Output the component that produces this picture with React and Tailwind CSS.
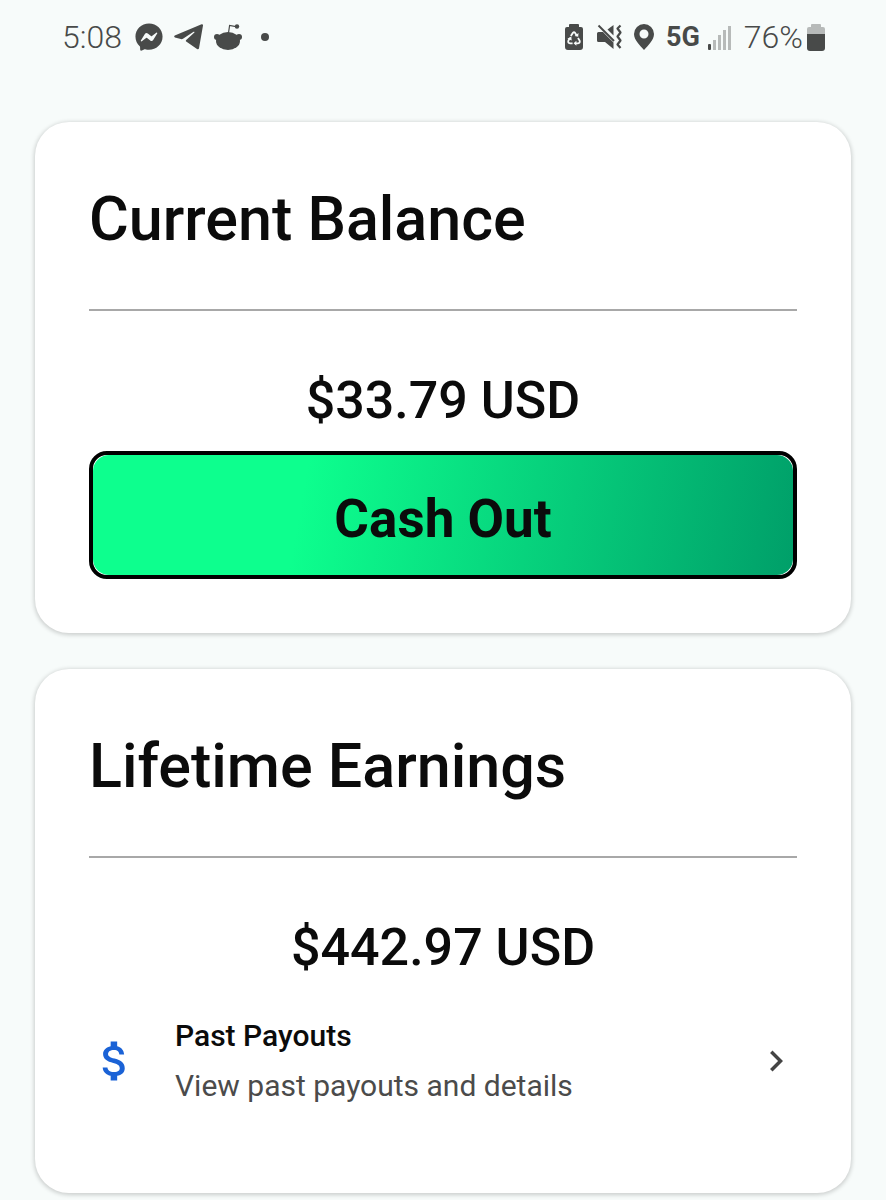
import React from 'react';
import { FaFacebookMessenger } from 'react-icons/fa';
import { MdAttachMoney, MdChevronRight } from 'react-icons/md';

const TelegramIcon = () => (
    <svg viewBox="0 0 29 26" className="w-[29px] h-[26px]" fill="currentColor">
        <path d="M27.6 0.3Q29.2 0 29 1.6L25 24.2Q24.6 26 23 25L12.2 17.6Q11.4 16.8 12.2 16L20.4 8.4Q20.8 7.4 19.6 7.8L9 14.8Q8 15.4 6.8 15.1L0.9 13.4Q-0.6 12.4 0.8 11.4z" />
    </svg>
);

const RedditIcon = () => (
    <svg viewBox="0 0 28 26" className="w-7 h-[26px]" fill="currentColor">
        <ellipse cx="14" cy="17" rx="12" ry="9" />
        <circle cx="3" cy="13" r="3" />
        <circle cx="25" cy="13" r="3" />
        <circle cx="23" cy="2.5" r="2.2" />
        <path d="M14.5 9 L15.6 1.4 L22 2.6" fill="none" stroke="currentColor" strokeWidth="1.2" />
    </svg>
);

const BatterySaverIcon = () => (
    <svg viewBox="0 0 18 26" className="w-[18px] h-[26px]">
        <path d="M5 0h8a1 1 0 0 1 1 1v2h2a2 2 0 0 1 2 2v18a3 3 0 0 1-3 3H3a3 3 0 0 1-3-3V5a2 2 0 0 1 2-2h2V1a1 1 0 0 1 1-1z" fill="currentColor" />
        <g fill="none" stroke="#f7fbfa" strokeWidth="1.8">
            <path d="M5.8 12 L7.9 8.9 Q9 7.5 10.1 8.9 L11.6 11.2" />
            <path d="M13 14 L14.6 16.6 Q15.4 19.2 13 19.3 H10.4" />
            <path d="M7.6 19.3 H5 Q2.6 19.2 3.4 16.6 L5 14" />
        </g>
        <path d="M9.6 12l3.6.8.3-3.8zM11.4 16.8v5L8.6 19.3zM2.4 14.8l3.9-2.2.4 4z" fill="#f7fbfa" />
    </svg>
);

const MuteVibrateIcon = () => (
    <svg viewBox="0 0 25 26" className="w-[25px] h-[26px]" fill="currentColor">
        <path d="M0 9.5Q0 8 1.5 8H6L16.5 18.5V25L8 18H1.5Q0 18 0 16.5z" />
        <path d="M10.5 5.5L16.5 1V11.5z" />
        <path d="M1.5 1.5L17 17" stroke="currentColor" strokeWidth="2" />
        <path d="M23.5 1.5L20.5 4.5L23.5 8.5L20.5 12.5L23.5 16.5L20.5 20.5L23.5 24" fill="none" stroke="currentColor" strokeWidth="2.2" strokeLinejoin="round" />
    </svg>
);

const PinIcon = () => (
    <svg viewBox="0 0 20 26" className="w-5 h-[26px]" fill="currentColor">
        <path fillRule="evenodd" d="M10 0a10 10 0 0 1 10 10c0 6-6 11.500-10 16C6 21.500 0 16 0 10A10 10 0 0 1 10 0zm0 5.500a4.500 4.500 0 1 0 0 9 4.500 4.500 0 0 0 0-9z" />
    </svg>
);

const SignalIcon = () => (
    <svg viewBox="0 0 24 25" className="w-6 h-[25px]" fill="#b7bab9">
        <rect x="0" y="19" width="3" height="6" rx="1" fill="#484a49" />
        <rect x="5" y="15" width="3" height="10" />
        <rect x="10" y="10" width="3" height="15" />
        <rect x="15" y="5" width="3" height="20" />
        <rect x="20" y="1" width="3" height="24" />
    </svg>
);

const BatteryIcon = () => (
    <svg viewBox="0 0 18 27" className="w-[18px] h-[27px]">
        <path d="M5 0h8a1 1 0 0 1 1 1v2h2a2 2 0 0 1 2 2v6H0V5a2 2 0 0 1 2-2h2V1a1 1 0 0 1 1-1z" fill="#b7bab9" />
        <path d="M0 10h18v14a3 3 0 0 1-3 3H3a3 3 0 0 1-3-3z" fill="currentColor" />
    </svg>
);

const StatusBar = () => (
    <header className="flex items-center justify-between h-[74px] pl-[62px] pr-[61px] text-[#484a49]">
        <div className="flex items-center gap-[11px]">
            <span className="mr-0.5 text-[32px] leading-9 font-light">5:08</span>
            <FaFacebookMessenger className="w-7 h-7" />
            <TelegramIcon />
            <RedditIcon />
            <span className="w-2 h-2 ml-2 rounded-full bg-[#484a49]" />
        </div>
        <div className="flex items-center">
            <BatterySaverIcon />
            <span className="ml-[14px]"><MuteVibrateIcon /></span>
            <span className="ml-3"><PinIcon /></span>
            <span className="ml-3 text-[27px] leading-9 font-bold">5G</span>
            <span className="ml-2"><SignalIcon /></span>
            <span className="ml-3 mr-1 text-[32px] leading-9 font-light">76%</span>
            <BatteryIcon />
        </div>
    </header>
);

const Card = ({ title, amount, children }) => (
    <section className="px-[54px] pt-[61px] pb-[54px] bg-white rounded-[34px] shadow-[0_1px_4px_1px_rgba(0,0,0,0.18)]">
        <h2 className="text-[61px] leading-[72px] font-medium">{title}</h2>
        <hr className="mt-[54px] border-t-2 border-[#a8a8a8]" />
        <p className="mt-[60px] text-[52px] leading-[60px] font-medium text-center">{amount}</p>
        {children}
    </section>
);

const App = () => {
    return (
        <div className="min-h-screen bg-[#f7fbfa] font-['Roboto',sans-serif] text-[#0b0b0b]">
            <StatusBar />

            <main className="flex flex-col gap-9 px-[35px] pt-12 pb-[7px]">
                <Card title="Current Balance" amount="$33.79 USD">
                    <button
                        type="button"
                        className="block w-full h-32 mt-5 p-0 rounded-[18px] border-4 border-black bg-white overflow-hidden"
                    >
                        <span className="flex items-center justify-center w-full h-full pt-2 rounded-[16px] bg-[linear-gradient(100deg,#0dff8e_30%,#009f69_100%)] text-[53px] leading-[60px] font-bold">
                            Cash Out
                        </span>
                    </button>
                </Card>

                <Card title="Lifetime Earnings" amount="$442.97 USD">
                    <a href="#payouts" className="flex items-center mt-[33px] mb-7">
                        <MdAttachMoney className="w-[52px] h-[52px] shrink-0 text-[#1a62d6]" />
                        <span className="flex-1 ml-[34px]">
                            <span className="block text-[30px] leading-[50px] font-medium">Past Payouts</span>
                            <span className="block text-[30px] leading-[50px] text-[#4b4b4b]">View past payouts and details</span>
                        </span>
                        <MdChevronRight className="w-[42px] h-[42px] shrink-0 text-[#444444]" />
                    </a>
                </Card>
            </main>
        </div>
    );
};

export default App;
